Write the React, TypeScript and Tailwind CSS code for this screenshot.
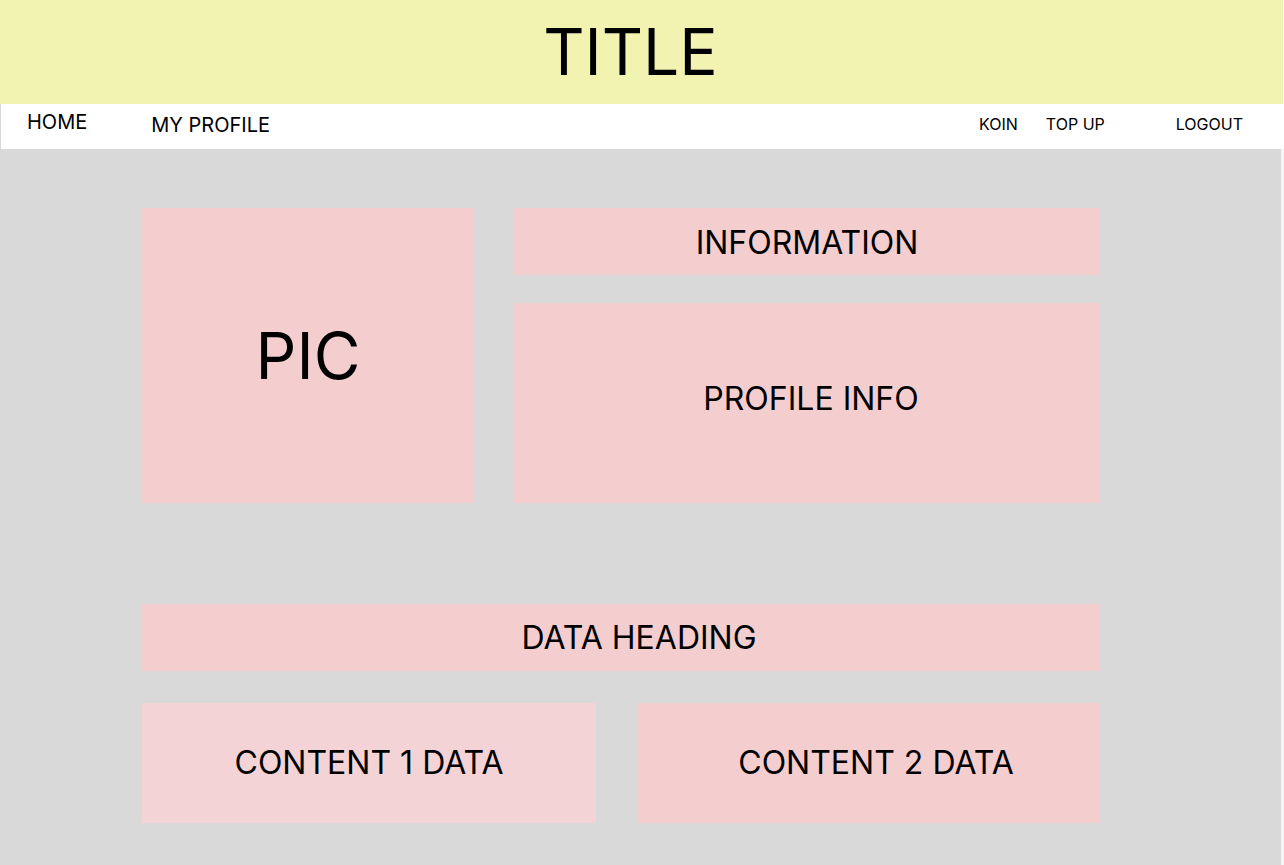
export default function App() {
  return (
    <div className="flex min-h-screen flex-col bg-[#f5f5f5] font-['Inter',sans-serif] text-black">
      <header className="flex h-[104px] items-center justify-center border-r border-white bg-[#f2f2b1] pr-[22px]">
        <h1 className="text-[64px] leading-[78px]">TITLE</h1>
      </header>
      <nav aria-label="Main" className="flex h-[45px] items-center justify-between border-l border-[#d9d9d9] bg-white pr-[41px] pb-[3px] pl-[26px]">
        <div className="flex gap-16 text-[20px] leading-6">
          <a href="#home" className="-mt-[3px]">HOME</a>
          <a href="#profile">MY PROFILE</a>
        </div>
        <div className="flex pb-[2px] text-[16px] leading-5">
          <a href="#koin">KOIN</a>
          <a href="#top-up" className="ml-7">TOP UP</a>
          <a href="#logout" className="ml-[71px]">LOGOUT</a>
        </div>
      </nav>
      <main className="mr-[3px] flex grow flex-col bg-[#d9d9d9] pt-[59px] pr-[181px] pb-[42px] pl-[142px] text-[32px] leading-10">
        <section className="flex gap-10">
          <div className="flex h-[295px] w-[332px] items-center justify-center bg-[#f4cdce] text-[64px]">PIC</div>
          <div className="flex grow flex-col gap-7">
            <h2 className="flex h-[67px] items-center justify-center bg-[#f4cdce] pt-[2px]">INFORMATION</h2>
            <div className="flex grow items-center justify-center bg-[#f4cdce] pb-2 pl-2">PROFILE INFO</div>
          </div>
        </section>
        <section className="mt-[101px]">
          <h2 className="flex h-[67px] items-center justify-center bg-[#f4cdce] pl-9">DATA HEADING</h2>
          <div className="mt-8 flex h-[120px] gap-[42px]">
            <div className="flex w-[454px] items-center justify-center bg-[#f3d3d5]">CONTENT 1 DATA</div>
            <div className="flex grow items-center justify-center bg-[#f4cdce] pl-[14px]">CONTENT 2 DATA</div>
          </div>
        </section>
      </main>
    </div>
  );
}
